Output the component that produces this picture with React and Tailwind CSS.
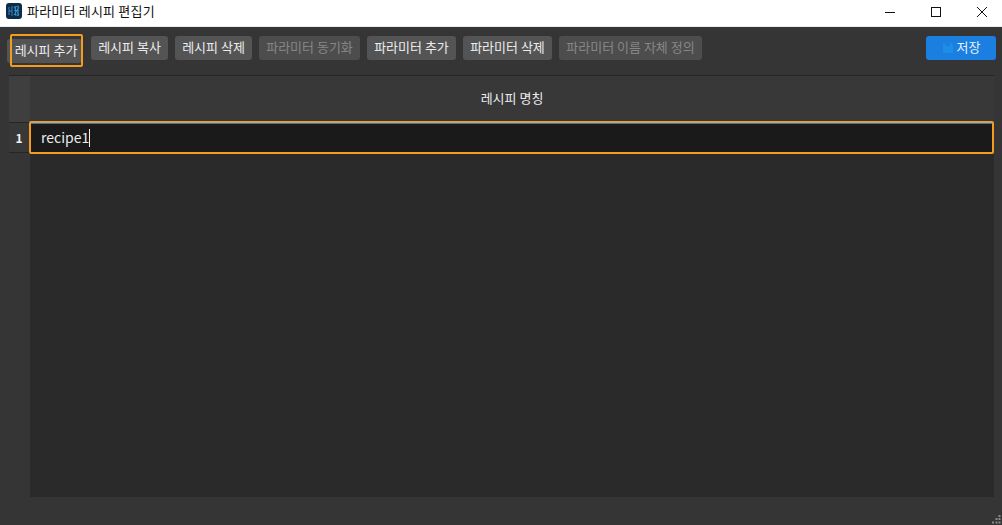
import React from "react";

function Btn({ children, w, disabled, extra = "" }) {
  return (
    <button
      className={`h-6 shrink-0 rounded-[3px] pb-[2px] text-[13px] leading-[22px] text-center whitespace-nowrap ${w} ${extra} ${disabled ? "bg-[#4d4d4d] text-[#868686]" : "bg-[#545454] text-[#ececec]"}`}
    >
      {children}
    </button>
  );
}

export default function App() {
  return (
    <div className="w-[1002px] h-[525px] overflow-hidden flex flex-col bg-[#353535] font-['Noto_Sans_CJK_KR','Liberation_Sans',sans-serif]">
      {/* Title bar */}
      <div className="h-[27px] shrink-0 bg-white flex items-center border-b border-[#ececec]">
        <svg width="16" height="16" viewBox="0 0 16 16" className="ml-[6px] mb-[4px]">
          <rect width="16" height="16" rx="3" fill="#0d2c4a" />
          <path d="M3 4v8M6 3v10M3 8h3M8 4l5-1M8 7.5h5M8 11.5l5 1M9.5 3.5v9M12 3.5v9M8 4l5 8M13 4l-5 8" stroke="#3f8fc4" strokeWidth="0.9" fill="none" />
        </svg>
        <span className="ml-[5px] mb-[5px] text-[13px] leading-4 text-[#111] tracking-[0.2px]">파라미터 레시피 편집기</span>
        <div className="ml-auto flex items-center mb-[3px]">
          <svg width="12" height="12" viewBox="0 0 12 12" className="mr-[34px]">
            <path d="M1 6.5h10" stroke="#111" strokeWidth="1" />
          </svg>
          <svg width="12" height="12" viewBox="0 0 12 12" className="mr-[34px]">
            <rect x="1.5" y="1.5" width="9" height="9" fill="none" stroke="#111" strokeWidth="1" />
          </svg>
          <svg width="12" height="12" viewBox="0 0 12 12" className="mr-[14px]">
            <path d="M1 1l10 10M11 1L1 11" stroke="#111" strokeWidth="1" />
          </svg>
        </div>
      </div>

      {/* Toolbar */}
      <div className="h-[48px] shrink-0 flex items-start pt-[9px] pl-[7px] pr-[6px] gap-[7px]">
        <div className="relative shrink-0 mr-[2px]">
          <Btn w="w-[75px]" extra="pl-[3px]">레시피 추가</Btn>
          <div className="absolute left-[3px] top-[-2px] w-[73px] h-[33px] border-2 border-[#f39c1f] rounded-[2px]" />
        </div>
        <Btn w="w-[77px]">레시피 복사</Btn>
        <Btn w="w-[77px]">레시피 삭제</Btn>
        <Btn w="w-[101px]" disabled>파라미터 동기화</Btn>
        <Btn w="w-[89px]">파라미터 추가</Btn>
        <Btn w="w-[89px]">파라미터 삭제</Btn>
        <Btn w="w-[143px]" disabled>파라미터 이름 자체 정의</Btn>
        <button className="ml-auto h-6 w-[70px] shrink-0 rounded-[3px] bg-[#1a7fe0] pb-[2px] flex items-center justify-center gap-[3px] text-[13px] text-[#e8f1fb]">
          <svg width="12" height="12" viewBox="0 0 12 12" className="mt-[2px]">
            <path d="M1 1h8l2 2v8H1z" fill="#1b90e6" />
            <rect x="3" y="1" width="5" height="3" fill="#1a7fe0" />
          </svg>
          저장
        </button>
      </div>

      {/* Table */}
      <div className="ml-[9px] mr-[8px] flex flex-col h-[422px] shrink-0">
        <div className="h-[46px] shrink-0 flex border-t border-[#252525]">
          <div className="w-[21px] shrink-0 bg-[#3f3f3f]" />
          <div className="flex-1 bg-[#383838] pb-[1px] flex items-center justify-center text-[13px] text-[#ececec]">
            레시피 명칭
          </div>
        </div>
        <div className="h-[33px] shrink-0 flex">
          <div className="w-[20px] h-[32px] shrink-0 pt-px bg-[#3f3f3f]">
            <div className="h-[31px] bg-[#383838] border-y border-[#252525] flex items-center justify-center text-[12px] font-bold text-[#f2f2f2]">
              1
            </div>
          </div>
          <div className="flex-1 bg-[#1a1a1a] border-2 border-[#f39c1f] rounded-[2px] shadow-[inset_0_1px_0_#1a7fe0] flex items-center pl-[10px] text-[14px] text-[#ececec]">
            recipe1
            <span className="w-px h-[18px] bg-[#f2f2f2]" />
          </div>
        </div>
        <div className="flex-1 flex">
          <div className="w-[21px] shrink-0" />
          <div className="flex-1 bg-[#2a2a2a]" />
        </div>
      </div>

      {/* Status area */}
      <div className="flex-1 flex items-end justify-end pr-px pb-px">
        <svg width="9" height="9" viewBox="0 0 9 9">
          <g fill="#8a8a8a">
            <rect x="6.5" y="0" width="2" height="2" />
            <rect x="3.5" y="3" width="2" height="2" />
            <rect x="6.5" y="3" width="2" height="2" />
            <rect x="0" y="6.5" width="2" height="2" />
            <rect x="3.5" y="6.5" width="2" height="2" />
            <rect x="6.5" y="6.5" width="2" height="2" />
          </g>
        </svg>
      </div>
    </div>
  );
}
